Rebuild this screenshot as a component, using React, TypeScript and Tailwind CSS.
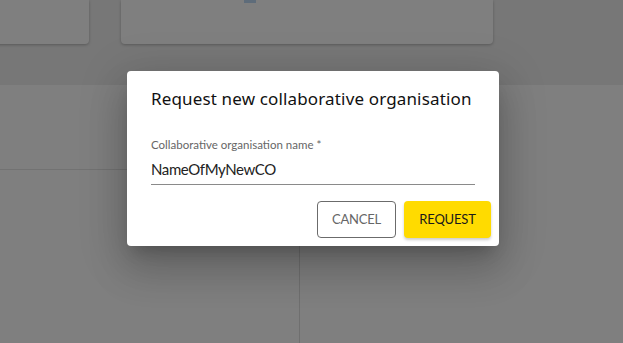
import React from "react"

const App = () => {
    return (
        <div className="relative h-[343px] w-[623px] overflow-hidden bg-white font-['Lato',sans-serif]">
            {/* page behind the dialog */}
            <div className="flex h-[85px] gap-8 bg-[#eeeeee]">
                <div className="-ml-4 h-[44px] w-[105px] rounded-b bg-white shadow-[0_1px_3px_rgba(0,0,0,0.25)]"></div>
                <div className="relative h-[44px] w-[372px] rounded-b bg-white shadow-[0_1px_3px_rgba(0,0,0,0.25)]">
                    <div className="absolute left-[123px] top-0 h-[3px] w-[12px] bg-[#bcd9f5]"></div>
                </div>
            </div>
            <div className="grid h-[258px] grid-cols-[300px_1fr]">
                <div className="border-r border-[#dedede]">
                    <div className="h-[85px] border-b border-[#e4e4e4]"></div>
                </div>
                <div></div>
            </div>

            {/* overlay */}
            <div className="absolute inset-0 flex justify-center bg-black/50 pt-[71px] pl-[3px]">
                <div className="h-[175px] w-[372px] rounded bg-white px-6 pt-[16px] shadow-[0_11px_15px_-7px_rgba(0,0,0,0.2),0_24px_38px_3px_rgba(0,0,0,0.14),0_9px_46px_8px_rgba(0,0,0,0.12)]">
                    <h2 className="whitespace-nowrap font-['Noto_Sans',sans-serif] text-[17px] leading-6 tracking-[0.15px] text-[#111111]">
                        Request new collaborative organisation
                    </h2>
                    <div className="mt-[26px] border-b border-[#8a8a8a] pb-[3px]">
                        <div className="text-[11.5px] leading-4 text-[#666666]">Collaborative organisation name *</div>
                        <div className="mt-[4px] text-[15px] leading-6 tracking-[-0.4px] text-[#222222]">NameOfMyNewCO</div>
                    </div>
                    <div className="-mr-4 mt-4 flex justify-end gap-2">
                        <button className="h-[37px] w-[79px] rounded border border-[#6b6b6b] text-[13px] tracking-[-0.2px] text-[#666666]">
                            CANCEL
                        </button>
                        <button className="h-[37px] w-[87px] rounded bg-[#ffdb00] text-[13px] tracking-[-0.2px] text-[#1a1a1a] shadow-[0_2px_3px_rgba(0,0,0,0.2)]">
                            REQUEST
                        </button>
                    </div>
                </div>
            </div>
        </div>
    )
}

export default App
